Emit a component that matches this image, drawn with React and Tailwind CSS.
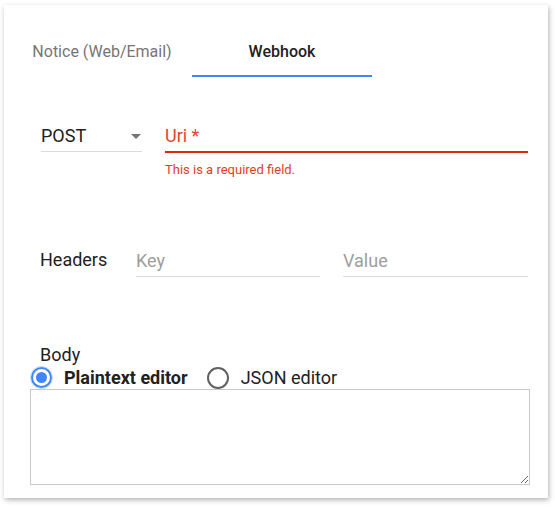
import React, { useState } from "react";

const Radio = ({ checked, label, onClick }) => {
  return (
    <label className="flex items-center cursor-pointer" onClick={onClick}>
      {checked ? (
        <span className="flex items-center justify-center w-[21px] h-[21px] rounded-full border-2 border-[#4285f4] shadow-[0_0_0_1px_rgba(66,133,244,0.25)]">
          <span className="w-[11px] h-[11px] rounded-full bg-[#4285f4]" />
        </span>
      ) : (
        <span className="w-[22px] h-[22px] rounded-full border-2 border-[#616161]" />
      )}
      <span
        className={
          checked
            ? "ml-[12px] text-[18px] font-bold text-[#212121]"
            : "ml-[12px] text-[18px] text-[#212121]"
        }
      >
        {label}
      </span>
    </label>
  );
};

const App = () => {
  const [tab, setTab] = useState("webhook");
  const [editor, setEditor] = useState("plain");

  return (
    <div
      className="w-[555px] h-[508px] bg-white pt-[5px] pl-[4px]"
      style={{ fontFamily: "Roboto, 'Liberation Sans', sans-serif" }}
    >
      <div className="w-[544px] h-[493px] bg-white shadow-[1px_2px_5px_rgba(0,0,0,0.3)] pt-[23px]">
        {/* Tabs */}
        <div className="flex pl-[8px]">
          <button
            className={
              tab === "notice"
                ? "w-[180px] h-[49px] flex items-center justify-center text-[16px] text-[#212121] font-medium border-b-2 border-[#4285f4]"
                : "w-[180px] h-[49px] flex items-center justify-center text-[16px] text-[#757575] border-b-2 border-transparent"
            }
            onClick={() => setTab("notice")}
          >
            Notice (Web/Email)
          </button>
          <button
            className={
              tab === "webhook"
                ? "w-[180px] h-[49px] flex items-center justify-center text-[16px] text-[#212121] font-medium border-b-2 border-[#4285f4]"
                : "w-[180px] h-[49px] flex items-center justify-center text-[16px] text-[#757575] border-b-2 border-transparent"
            }
            onClick={() => setTab("webhook")}
          >
            Webhook
          </button>
        </div>

        <div className="pl-[37px] pr-[20px]">
          {/* Method + Uri */}
          <div className="flex items-start mt-[43px]">
            <div className="w-[101px] flex items-center justify-between pt-[4px] pb-[3px] border-b border-[#dcdcdc]">
              <span className="text-[18px] leading-[24px] text-[#212121]">POST</span>
              <svg width="10" height="5" viewBox="0 0 10 5" className="mr-[1px]">
                <path d="M0 0 L10 0 L5 5 Z" fill="#757575" />
              </svg>
            </div>
            <div className="flex-1 ml-[23px]">
              <div className="pt-[4px] pb-[2px] border-b-2 border-[#dd2c00]">
                <span className="text-[18px] leading-[24px] text-[#e4472a]">Uri *</span>
              </div>
              <div className="mt-[9px] text-[13px] leading-[16px] text-[#e0402a]">
                This is a required field.
              </div>
            </div>
          </div>

          {/* Headers */}
          <div className="flex items-start mt-[67px]">
            <div className="w-[95px] pt-[3px] -ml-[1px] mr-[1px] text-[18px] leading-[24px] text-[#212121]">Headers</div>
            <div className="w-[184px] pt-[4px] pb-[3px] border-b border-[#dcdcdc] text-[18px] leading-[24px] text-[#9e9e9e]">
              Key
            </div>
            <div className="flex-1 ml-[23px] pt-[4px] pb-[3px] border-b border-[#dcdcdc] text-[18px] leading-[24px] text-[#9e9e9e]">
              Value
            </div>
          </div>
        </div>

        {/* Body */}
        <div className="pl-[26px] pr-[18px] mt-[67px]">
          <div className="pl-[10px] text-[18px] leading-[22px] text-[#212121]">Body</div>
          <div className="flex items-center h-[23px] pl-[1px] gap-[19px]">
            <Radio
              checked={editor === "plain"}
              label="Plaintext editor"
              onClick={() => setEditor("plain")}
            />
            <Radio
              checked={editor === "json"}
              label="JSON editor"
              onClick={() => setEditor("json")}
            />
          </div>
          <textarea className="block w-[500px] h-[96px] border border-[#c8c8c8] outline-none p-2 text-[14px]" />
        </div>
      </div>
    </div>
  );
};

export default App;
